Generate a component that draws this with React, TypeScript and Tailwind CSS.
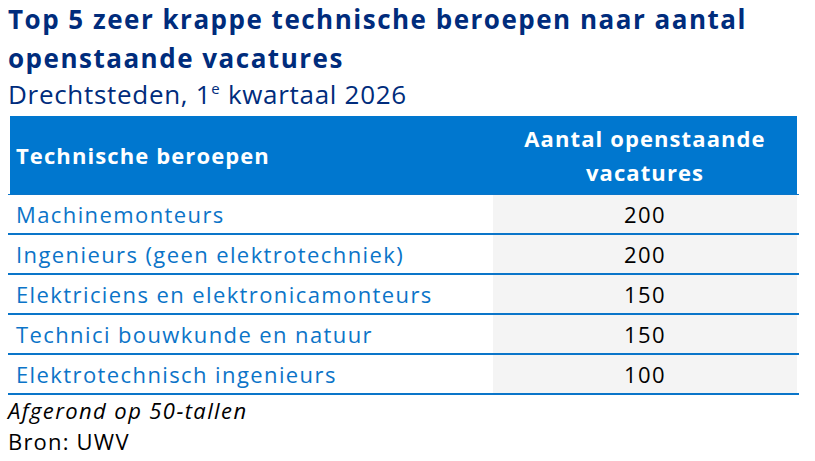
const rows = [
  { name: 'Machinemonteurs', count: 200 },
  { name: 'Ingenieurs (geen elektrotechniek)', count: 200 },
  { name: 'Elektriciens en elektronicamonteurs', count: 150 },
  { name: 'Technici bouwkunde en natuur', count: 150 },
  { name: 'Elektrotechnisch ingenieurs', count: 100 },
]

export default function App() {
  return (
    <div className="w-[815px] h-[461px] overflow-hidden bg-white pl-2 font-['Open_Sans',sans-serif]">
      <h1 className="text-[26px] leading-[39px] font-bold text-[#002c7c] tracking-[1.5px]">
        Top 5 zeer krappe technische beroepen naar aantal
        <br />
        openstaande vacatures
      </h1>
      <p className="text-[26px] leading-[32px] text-[#002c7c] tracking-[0.7px]">
        Drechtsteden, 1<span className="relative -top-[10px] text-[15px] leading-none">e</span> kwartaal 2026
      </p>

      <div className="w-[791px] mt-[6px]">
        <div className="px-[2px] border-b border-[#0a75c9]">
          <div className="grid grid-cols-[483px_1fr] h-[78px] bg-[#0077cf] text-white font-bold text-[22px] tracking-[1.1px]">
            <div className="flex items-center pl-[6px]">Technische beroepen</div>
            <div className="flex items-center justify-center text-center leading-[34px]">
              Aantal openstaande
              <br />
              vacatures
            </div>
          </div>
        </div>
        {rows.map((row) => (
          <div key={row.name} className="px-[2px] border-b-2 border-[#0a75c9]">
            <div className="grid grid-cols-[483px_1fr] h-[38px] text-[22px] tracking-[1.4px]">
              <div className="flex items-center pl-[6px] text-[#0b74c8]">{row.name}</div>
              <div className="flex items-center justify-center bg-[#f4f4f4] text-black">{row.count}</div>
            </div>
          </div>
        ))}
      </div>

      <p className="text-[22px] leading-[31px] italic text-black tracking-[1.4px]">Afgerond op 50-tallen</p>
      <p className="text-[22px] leading-[31px] text-black tracking-[1.2px]">Bron: UWV</p>
    </div>
  )
}
